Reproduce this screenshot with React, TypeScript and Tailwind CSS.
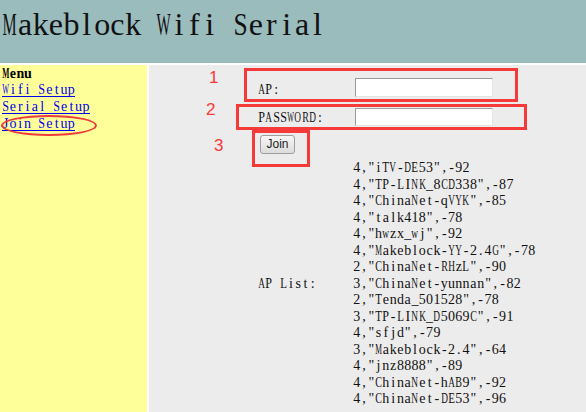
import React from "react";

const aps = [
  '4,"iTV-DE53",-92',
  '4,"TP-LINK_8CD338",-87',
  '4,"ChinaNet-qVYK",-85',
  '4,"talk418",-78',
  '4,"hwzx_wj",-92',
  '4,"Makeblock-YY-2.4G",-78',
  '2,"ChinaNet-RHzL",-90',
  '3,"ChinaNet-yunnan",-82',
  '2,"Tenda_501528",-78',
  '3,"TP-LINK_D5069C",-91',
  '4,"sfjd",-79',
  '3,"Makeblock-2.4",-64',
  '4,"jnz8888",-89',
  '4,"ChinaNet-hAB9",-92',
  '4,"ChinaNet-DE53",-96',
];

// approximate advance widths (em) of wide glyphs in Liberation Serif
const WIDE: Record<string, number> = {
  A: 0.722, B: 0.667, C: 0.667, D: 0.722, E: 0.611, F: 0.556, G: 0.722, H: 0.722,
  K: 0.722, L: 0.611, M: 0.889, N: 0.722, O: 0.722, P: 0.556, R: 0.667, S: 0.556,
  T: 0.611, U: 0.722, V: 0.722, W: 0.944, X: 0.722, Y: 0.722, Z: 0.611,
  m: 0.778, w: 0.722,
};

function Mono({ text, cell, fs, cellClass }: { text: string; cell: number; fs: number; cellClass: string }) {
  return (
    <>
      {Array.from(text).map((c, i) => {
        const wd = WIDE[c];
        const adv = wd ? wd * fs : 0;
        const s = wd ? Math.min(1, (cell * 0.92) / adv) : 1;
        const style: React.CSSProperties | undefined =
          s < 1
            ? {
                letterSpacing: `${(cell - adv).toFixed(2)}px`,
                transformOrigin: "left center",
                transform: `translateX(${((cell - adv * s) / 2).toFixed(2)}px) scaleX(${s.toFixed(3)})`,
              }
            : undefined;
        return (
          <span key={i} className={"inline-block text-center whitespace-pre " + cellClass} style={style}>
            {c}
          </span>
        );
      })}
    </>
  );
}

const B = ({ t }: { t: string }) => <Mono text={t} cell={7.3} fs={14} cellClass="w-[7.3px]" />;

export default function App() {
  return (
    <div className="relative w-[586px] h-[412px] overflow-hidden bg-white text-black font-['Liberation_Serif',serif]">
      {/* header */}
      <div className="h-[63px] bg-[#9bbcbd] border-b-2 border-white box-content">
        <h1 className="pl-[2px] pt-[6px] text-[32px] leading-[36px] font-normal text-[#111] flex">
          <Mono text="Makeblock Wifi Serial" cell={15.4} fs={32} cellClass="w-[15.4px]" />
        </h1>
      </div>
      <div className="flex h-[347px]">
        {/* sidebar */}
        <div className="w-[147px] bg-[#ffff99] border-r-2 border-white box-content text-[14px] leading-[17px]">
          <div className="font-bold pl-[2px] flex h-[17px]">
            <B t="Menu" />
          </div>
          <div className="pl-[2px] flex flex-col">
            <a href="#" className="flex w-fit h-[15px] leading-[15px] mb-[2px] text-[#0000ee] border-b border-[#0000ee]">
              <B t="Wifi Setup" />
            </a>
            <a href="#" className="flex w-fit h-[15px] leading-[15px] mb-[2px] text-[#0000ee] border-b border-[#0000ee]">
              <B t="Serial Setup" />
            </a>
            <a href="#" className="flex w-fit h-[15px] leading-[15px] mb-[2px] text-[#0000ee] border-b border-[#0000ee]">
              <B t="Join Setup" />
            </a>
          </div>
        </div>
        {/* main */}
        <div className="flex-1 bg-[#ececec] pl-[109px] pt-[13px] text-[14px] text-[#111]">
          <div className="flex items-center h-[19px]">
            <span className="w-[97px] flex pt-[3px]">
              <B t="AP:" />
            </span>
            <input className="w-[138px] h-[19px] bg-white border border-t-[#9a9a9a] border-l-[#9a9a9a] border-r-[#e4e4e4] border-b-[#e4e4e4] outline-none" />
          </div>
          <div className="flex items-center h-[18px] mt-[11px]">
            <span className="w-[97px] flex">
              <B t="PASSWORD:" />
            </span>
            <input
              type="password"
              className="w-[138px] h-[18px] bg-white border border-t-[#9a9a9a] border-l-[#9a9a9a] border-r-[#e4e4e4] border-b-[#e4e4e4] outline-none"
            />
          </div>
          <div className="mt-[7px] ml-[2px]">
            <button className="w-[35px] h-[19px] rounded-[3px] border border-[#9e9e9e] bg-gradient-to-b from-[#f6f6f6] to-[#dcdcdc] text-[12px] leading-none text-[#222] font-['Liberation_Sans',sans-serif]">
              Join
            </button>
          </div>
          <div className="flex items-center mt-[6px]">
            <span className="w-[95px] flex">
              <B t="AP List:" />
            </span>
            <div className="flex flex-col leading-[16.5px]">
              {aps.map((a) => (
                <span key={a} className="flex h-[16.5px]">
                  <B t={a} />
                </span>
              ))}
            </div>
          </div>
        </div>
      </div>

      {/* annotations */}
      <div className="absolute left-[244px] top-[68px] w-[274px] h-[34px] border-[3px] border-[#f63a3a]" />
      <div className="absolute left-[236px] top-[104px] w-[291px] h-[26px] border-[3px] border-[#f63a3a]" />
      <div className="absolute left-[252px] top-[130px] w-[58px] h-[37px] border-[3px] border-[#f63a3a]" />
      <div className="absolute left-[1px] top-[115px] w-[96px] h-[21px] rounded-[50%] border-2 border-[#ee3b3b]" />
      <span className="absolute left-[209px] top-[68px] text-[17px] leading-[20px] text-[#f63a3a] font-['Liberation_Sans',sans-serif]">1</span>
      <span className="absolute left-[206px] top-[100px] text-[17px] leading-[20px] text-[#f63a3a] font-['Liberation_Sans',sans-serif]">2</span>
      <span className="absolute left-[214px] top-[136px] text-[17px] leading-[20px] text-[#f63a3a] font-['Liberation_Sans',sans-serif]">3</span>
    </div>
  );
}
